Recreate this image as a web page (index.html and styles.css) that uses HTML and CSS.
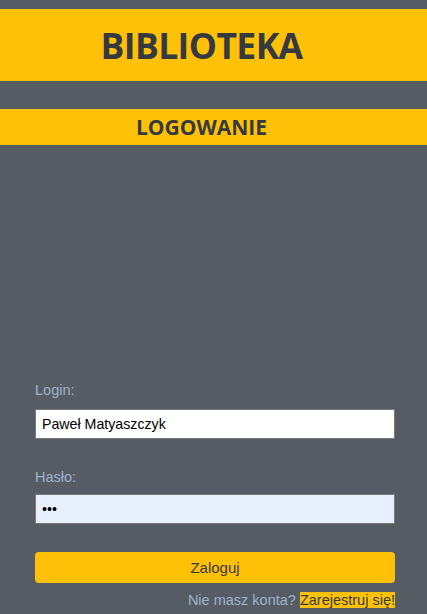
FILE: index.html
```html
<!DOCTYPE html>
<html lang="pl">
<head>
<meta charset="utf-8">
<title>Biblioteka - Logowanie</title>
<link rel="stylesheet" href="styles.css">
</head>
<body>
<header class="banner">
  <h1 class="banner-title">BIBLIOTEKA</h1>
</header>
<section class="subbar">
  <h2 class="subbar-title">LOGOWANIE</h2>
</section>
<main class="login">
  <form class="login-form">
    <label class="field-label" for="login">Login:</label>
    <input class="field-input" id="login" type="text" value="Paweł Matyaszczyk">
    <label class="field-label field-label-pass" for="pass">Hasło:</label>
    <input class="field-input field-autofill" id="pass" type="password" value="abc">
    <button class="submit-btn" type="button">Zaloguj</button>
    <p class="register">Nie masz konta? <a class="register-link" href="#">Zarejestruj się!</a></p>
  </form>
</main>
</body>
</html>
```
FILE: styles.css
```css
html, body {
  margin: 0;
  padding: 0;
}
body {
  background: #565c64;
  font-family: "Liberation Sans", Arial, sans-serif;
  height: 614px;
  overflow: hidden;
}
.banner {
  margin-top: 9px;
  height: 72px;
  background: #ffc107;
  display: flex;
  align-items: center;
  justify-content: center;
  padding-right: 24px;
}
.banner-title {
  margin: 0;
  font-family: "Open Sans", sans-serif;
  font-weight: 700;
  font-size: 35.5px;
  letter-spacing: -0.6px;
  color: #343a40;
}
.subbar {
  margin-top: 28px;
  height: 36px;
  background: #ffc107;
  display: flex;
  align-items: center;
  justify-content: center;
  padding-right: 24px;
}
.subbar-title {
  margin: 0;
  font-family: "Open Sans", sans-serif;
  font-weight: 700;
  font-size: 21px;
  color: #343a40;
}
.login {
  padding: 234px 32px 0 35px;
}
.login-form {
  display: flex;
  flex-direction: column;
}
.field-label {
  color: #9fb3cc;
  font-size: 14.5px;
  line-height: 17px;
  padding-top: 3px;
  margin-bottom: 10px;
}
.field-label-pass {
  margin-bottom: 8px;
}
.field-input {
  box-sizing: border-box;
  height: 30px;
  width: 100%;
  border: 1px solid #7a7a7a;
  background: #ffffff;
  font-family: "Liberation Sans", Arial, sans-serif;
  font-size: 14.2px;
  color: #000;
  padding: 0 6px;
  margin: 0 0 27px 0;
  outline: none;
}
.field-autofill {
  background: #e8f0fe;
  margin-bottom: 28px;
}
.submit-btn {
  height: 31px;
  width: 100%;
  border: none;
  border-radius: 4px;
  background: #ffc107;
  color: #343a40;
  font-family: "Liberation Sans", Arial, sans-serif;
  font-size: 15px;
  cursor: pointer;
}
.register {
  margin: 9px 0 0 0;
  text-align: right;
  color: #9fb3cc;
  font-size: 14.5px;
  line-height: 17px;
}
.register-link {
  background: #ffc107;
  color: #343a40;
  text-decoration: none;
}
```
